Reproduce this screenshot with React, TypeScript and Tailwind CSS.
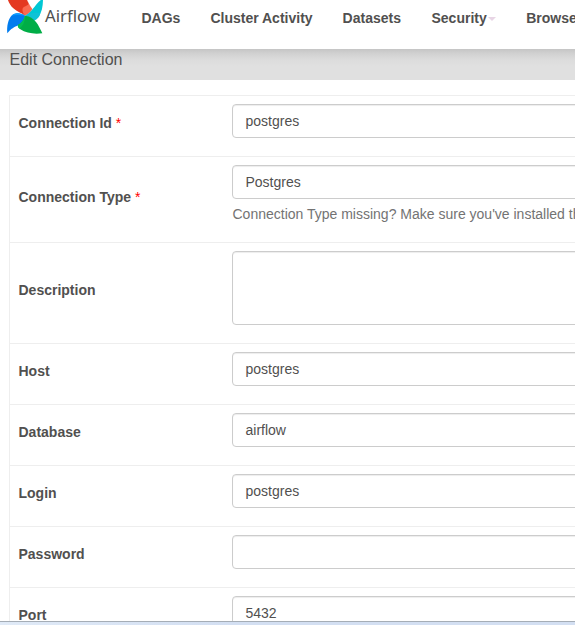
import React from 'react';

const Pinwheel = () => (
  <svg viewBox="0 0 150 120" className="block h-10 w-[50px] shrink-0">
    <path d="M22 -6C25 5 30 16 40 25C51 36 65 39 75 47L78 22L88 14L78 -6Z" fill="#e43921" />
    <path d="M80 -4C84 8 91 19 97 27C93 37 84 43 75 47C69 39 65 31 69 23C74 18 82 17 87 11Z" fill="#fb6a50" />
    <path d="M129 -4C115 3 108 16 98 27C91 37 83 43 75 47L116 49C126 36 129 18 129 -4Z" fill="#00c7d4" />
    <path d="M75 47C86 43 105 35 121 40C120 49 113 57 103 62C96 55 86 49 75 47Z" fill="#0fc2d6" />
    <path d="M22 100C20 80 24 57 36 46C49 36 65 40 75 47C75 59 67 70 55 76C43 81 33 86 22 100Z" fill="#017cee" />
    <path d="M34 47C45 36 63 38 75 47C63 46 51 43 34 47Z" fill="#0c9bff" />
    <path d="M75 47C88 47 99 54 108 66C116 76 121 88 127 100C103 103 78 100 61 88C54 83 52 77 54 75C66 68 73 58 75 47Z" fill="#00ad46" />
    <path d="M75 47C72 59 65 68 54 75C53 79 54 83 58 86C67 80 76 64 75 47Z" fill="#04bd4f" />
  </svg>
);

const NavItem = ({ children }: { children: React.ReactNode }) => (
  <a className="flex items-center whitespace-nowrap">{children}</a>
);

const rows = [
  { label: 'Connection Id', value: 'postgres', required: true },
  { label: 'Connection Type', value: 'Postgres', required: true, help: "Connection Type missing? Make sure you've installed the corresponding Airflow Provider Package." },
  { label: 'Description', value: '', area: true },
  { label: 'Host', value: 'postgres' },
  { label: 'Database', value: 'airflow' },
  { label: 'Login', value: 'postgres' },
  { label: 'Password', value: '' },
  { label: 'Port', value: '5432' },
];

function heightOf(row: (typeof rows)[number]) {
  if (row.help) return 'h-[86px]';
  return row.area ? 'h-[101px]' : 'h-[61px]';
}

export default function App() {
  return (
    <div className="flex h-[625px] w-[575px] flex-col overflow-hidden bg-white font-['Liberation_Sans',Arial,sans-serif] text-sm text-[#51504f]">
      <header className="flex h-[49px] shrink-0 items-start overflow-hidden">
        <Pinwheel />
        <span className="-ml-[5px] mt-[5px] w-[96.5px] shrink-0 font-['Noto_Sans',sans-serif] text-[16.8px] leading-[22px]">Airflow</span>
        <nav className="flex shrink-0 gap-[30px] pt-2 font-bold leading-5">
          <NavItem>DAGs</NavItem>
          <NavItem>Cluster Activity</NavItem>
          <NavItem>Datasets</NavItem>
          <NavItem>
            <span className="ml-[0.5px]">Security</span>
            <span className="ml-[1.5px] mt-[2px] border-x-4 border-t-4 border-x-transparent border-t-[#e8d5e5]" />
          </NavItem>
          <NavItem>Browse</NavItem>
        </nav>
      </header>
      <div className="h-[31px] shrink-0 bg-[linear-gradient(#c5c5c5,#d2d2d2_5px,#dcdcdc_11px,#e0e0e0_17px)] pl-[9.5px] text-base leading-[21px]">
        Edit Connection
      </div>
      <main className="min-h-0 flex-1 overflow-hidden pl-[9px] pt-[15px]">
        <div className="w-[620px] border-l border-[#eeeeee]">
          {rows.map((row) => (
            <div key={row.label} className={`flex border-t border-[#eeeeee] ${heightOf(row)}`}>
              <label className={`flex w-[222px] shrink-0 items-center pl-[8.5px] font-bold leading-5 ${row.help ? 'pb-[5px]' : 'pb-[6px]'}`}>
                {row.label}
                {row.required && <span className="ml-1 font-normal text-[#ff0000]">*</span>}
              </label>
              <div className="flex-1 pt-2">
                <div className={`rounded border border-[#cccccc] pl-[12.5px] leading-8 shadow-[inset_0_1px_1px_rgba(0,0,0,0.075)] ${row.area ? 'h-[74px]' : 'h-[34px]'}`}>
                  {row.value}
                </div>
                {row.help && <p className="mt-[5px] whitespace-nowrap pl-[0.5px] leading-5 text-[#737373]">{row.help}</p>}
              </div>
            </div>
          ))}
        </div>
      </main>
      <footer className="h-1 shrink-0 border-t border-[#a5adb6] bg-[linear-gradient(90deg,#e0eaf7,#d3dff2_40%,#d3dff2)]" />
    </div>
  );
}
